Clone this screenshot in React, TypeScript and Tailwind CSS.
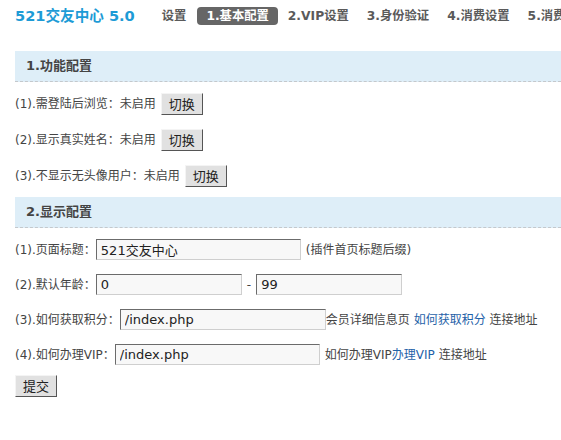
const FONT = { fontFamily: '"DejaVu Sans", Verdana, "Noto Sans CJK SC", sans-serif' }

const NAV = ['2.VIP设置', '3.身份验证', '4.消费设置', '5.消费记录']

function SectionHeader({ title }: { title: string }) {
  return (
    <div className="ml-[15px] h-[31px] flex items-center pl-[11px] bg-[#deeef8] border-b border-dashed border-[#c4c8cc] text-[13px] font-bold text-[#444]">
      {title}
    </div>
  )
}

function ToggleBtn() {
  return (
    <button
      type="button"
      className="h-[22px] w-[42px] ml-[5px] bg-[#e1e1e1] border border-t-[#f4f4f4] border-l-[#f4f4f4] border-r-[#555] border-b-[#555] text-[13px] text-[#222] leading-none"
    >
      切换
    </button>
  )
}

function TextInput({ value, w }: { value: string; w: string }) {
  return (
    <input
      type="text"
      defaultValue={value}
      style={FONT}
      className={`${w} h-[21px] px-[4px] bg-[#f8f8f8] border border-t-[#6b6b6b] border-l-[#6b6b6b] border-r-[#cfcfcf] border-b-[#cfcfcf] text-[13px] text-[#222] outline-none`}
    />
  )
}

function Label({ n, text }: { n: number; text: string }) {
  return (
    <span className="text-[12px] text-[#444]">
      ({n}).{text}
    </span>
  )
}

export default function App() {
  return (
    <div style={FONT} className="w-[561px] h-[440px] overflow-hidden bg-white text-[#444]">
      <div className="h-[32px] flex items-center pl-[15px] whitespace-nowrap overflow-hidden">
        <span className="text-[14.6px] font-bold text-[#1d9bd6]">521交友中心 5.0</span>
        <div className="flex items-center ml-[27px] text-[12.3px] font-bold text-[#5a5a5a]">
          <span>设置</span>
          <span className="ml-[11px] px-[9px] h-[18px] flex items-center rounded-[4px] bg-[#666] text-white">1.基本配置</span>
          <span className="ml-[10px]">{NAV[0]}</span>
          {NAV.slice(1).map((n) => (
            <span key={n} className="ml-[18px]">
              {n}
            </span>
          ))}
        </div>
      </div>

      <div className="h-[19px]" />
      <SectionHeader title="1.功能配置" />

      <div className="pt-[4px] pl-[15px]">
        <div className="h-[36px] flex items-center">
          <Label n={1} text="需登陆后浏览：未启用" />
          <ToggleBtn />
        </div>
        <div className="h-[36px] flex items-center">
          <Label n={2} text="显示真实姓名：未启用" />
          <ToggleBtn />
        </div>
        <div className="h-[36px] flex items-center">
          <Label n={3} text="不显示无头像用户：未启用" />
          <ToggleBtn />
        </div>
      </div>

      <div className="h-[3px]" />
      <SectionHeader title="2.显示配置" />

      <div className="pt-[4px] pl-[15px] text-[12px]">
        <div className="h-[35px] flex items-center">
          <Label n={1} text="页面标题：" />
          <TextInput value="521交友中心" w="w-[205px]" />
          <span className="ml-[5px]">(插件首页标题后缀)</span>
        </div>
        <div className="h-[35px] flex items-center">
          <Label n={2} text="默认年龄：" />
          <TextInput value="0" w="w-[146px]" />
          <span className="mx-[5px]">-</span>
          <TextInput value="99" w="w-[146px]" />
        </div>
        <div className="h-[35px] flex items-center">
          <Label n={3} text="如何获取积分：" />
          <TextInput value="/index.php" w="w-[206px]" />
          <span>
            会员详细信息页 <a className="text-[#1f62a8]">如何获取积分</a> 连接地址
          </span>
        </div>
        <div className="h-[35px] flex items-center">
          <Label n={4} text="如何办理VIP：" />
          <TextInput value="/index.php" w="w-[205px]" />
          <span className="ml-[5px]">
            如何办理VIP<a className="text-[#1f62a8]">办理VIP</a> 连接地址
          </span>
        </div>
        <div className="pt-[3px]">
          <button
            type="button"
            className="h-[22px] w-[42px] bg-[#e1e1e1] border border-t-[#f4f4f4] border-l-[#f4f4f4] border-r-[#555] border-b-[#555] text-[13px] text-[#222] leading-none"
          >
            提交
          </button>
        </div>
      </div>
    </div>
  )
}
